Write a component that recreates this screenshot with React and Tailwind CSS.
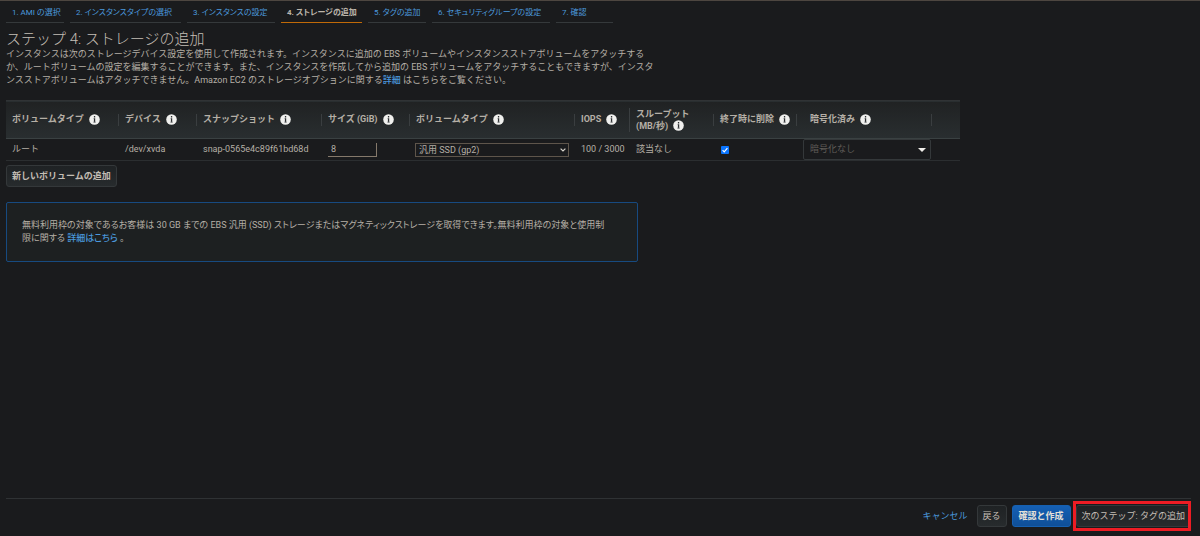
const steps = [
  { label: "1. AMI の選択", width: "w-[58px]" },
  { label: "2. インスタンスタイプの選択", width: "w-[111px]" },
  { label: "3. インスタンスの設定", width: "w-[88px]" },
  { label: "4. ストレージの追加", width: "w-[81px]", active: true },
  { label: "5. タグの追加", width: "w-[58px]" },
  { label: "6. セキュリティグループの設定", width: "w-[118px]" },
  { label: "7. 確認", width: "w-[57px]" },
];

const columns = [
  { label: "ボリュームタイプ", width: "w-[112px]" },
  { label: "デバイス", width: "w-[78px]" },
  { label: "スナップショット", width: "w-[125px]" },
  { label: "サイズ (GiB)", width: "w-[88px]" },
  { label: "ボリュームタイプ", width: "w-[165px]" },
  { label: "IOPS", width: "w-[55px]" },
  { label: "スループット", second: "(MB/秒)", width: "w-[84px]" },
  { label: "終了時に削除", width: "w-[83px]" },
  { label: "暗号化済み", width: "w-[135px]", wide: true },
];

function Info() {
  return (
    <svg viewBox="0 0 22 22" className="h-[11px] w-[11px] shrink-0" aria-hidden="true">
      <circle cx="11" cy="11" r="10.6" fill="#f0f0ee" />
      <path d="M9.8 4.2h2.6v2.6H9.8zM9.8 8.4h2.6v8.4H9.8z" fill="#2b2e30" />
      <path d="M8.2 8.4h1.6v1.2H8.2zM8.2 15.6h5.8v1.2H8.2z" fill="#85878a" />
    </svg>
  );
}

function HeaderCell({ col, first }) {
  return (
    <th scope="col" className="p-0 text-left align-middle font-bold">
      <div
        className={
          "flex items-center gap-[5px] border-l whitespace-nowrap " +
          (first ? "border-transparent pl-[5px] " : "border-[#3a3e40] ") +
          (first ? "" : col.wide ? "pl-[13px] " : "pl-[6px] ") +
          (col.second ? "h-6" : "h-3")
        }
      >
        {col.second ? (
          <span className="leading-3">
            {col.label}
            <span className="flex items-center gap-[5px]">
              {col.second}
              <Info />
            </span>
          </span>
        ) : (
          <>
            {col.label}
            <Info />
          </>
        )}
      </div>
    </th>
  );
}

const button =
  "h-[22px] rounded-[3px] border border-[#34383a] bg-linear-to-b from-[#1f2224] to-[#272b2d] px-[5px] whitespace-nowrap";

export default function App() {
  return (
    <div className="flex min-h-screen flex-col border-t border-[#4d4640] bg-[#1a1b1d] px-[6px] font-[Roboto,'Noto_Sans_CJK_JP',sans-serif] text-[9px] leading-[13px] text-[#b5afa6]">
      <nav aria-label="ステップ" className="flex gap-[6px] [font-feature-settings:'palt']">
        {steps.map((s) => (
          <a
            key={s.label}
            href="#step"
            aria-current={s.active ? "step" : undefined}
            className={
              "h-[22px] shrink-0 border-b pt-[6px] pl-[6px] text-[8px] leading-3 whitespace-nowrap " +
              s.width +
              (s.active ? " border-[#c06a08] font-bold text-[#bcb5ab]" : " border-[#35393b] text-[#4a98dc]")
            }
          >
            {s.label}
          </a>
        ))}
      </nav>

      <main>
        <h1 className="mt-[6px] text-[15px] leading-5 font-light text-[#c4beb5]">ステップ 4: ストレージの追加</h1>
        <p className="-mt-px whitespace-nowrap">
          インスタンスは次のストレージデバイス設定を使用して作成されます。インスタンスに追加の EBS ボリュームやインスタンスストアボリュームをアタッチする
          <br />
          か、ルートボリュームの設定を編集することができます。また、インスタンスを作成してから追加の EBS ボリュームをアタッチすることもできますが、インスタ
          <br />
          ンスストアボリュームはアタッチできません。Amazon EC2 のストレージオプションに関する
          <a href="#details" className="font-medium text-[#4a98dc]">詳細</a> はこちらをご覧ください。
        </p>

        <table className="mt-[13px] w-full max-w-[954px] table-fixed border-collapse">
          <colgroup>
            {columns.map((c, i) => (
              <col key={i} className={c.width} />
            ))}
            <col />
          </colgroup>
          <thead>
            <tr className="h-[38px] border-t border-b border-t-[#303335] border-b-[#3a4142] bg-linear-to-b from-[#202223] to-[#292e30]">
              {columns.map((c, i) => (
                <HeaderCell key={i} col={c} first={i === 0} />
              ))}
              <td className="p-0">
                <div className="h-3 border-l border-[#3a3e40]" />
              </td>
            </tr>
          </thead>
          <tbody>
            <tr className="h-[22px] border-b border-[#2b2e30] whitespace-nowrap">
              <td className="p-0 pl-[6px]">ルート</td>
              <td className="p-0 pl-[7px]">/dev/xvda</td>
              <td className="p-0 pl-[7px]">snap-0565e4c89f61bd68d</td>
              <td className="p-0 pl-[7px]">
                <input
                  aria-label="サイズ (GiB)"
                  defaultValue="8"
                  className="block h-[14px] w-[49px] border-r border-b border-[#85796b] bg-transparent pl-[3px] outline-none"
                />
              </td>
              <td className="p-0 pl-[6px]">
                <div className="grid w-[154px] items-center">
                  <select
                    aria-label="ボリュームタイプ"
                    className="col-start-1 row-start-1 h-[14px] appearance-none border border-[#5e554b] bg-transparent pl-[3px] leading-3"
                  >
                    <option>汎用 SSD (gp2)</option>
                  </select>
                  <svg viewBox="0 0 6 4" className="pointer-events-none col-start-1 row-start-1 mr-[3px] h-1 w-[6px] justify-self-end">
                    <path d="M.6.6 3 3 5.4.6" fill="none" stroke="#d8d4cc" strokeWidth="1.2" />
                  </svg>
                </div>
              </td>
              <td className="p-0 pl-[7px]">100 / 3000</td>
              <td className="p-0 pl-[7px]">該当なし</td>
              <td className="p-0 pl-2">
                <label className="grid h-2 w-2 items-center">
                  <input
                    type="checkbox"
                    defaultChecked
                    aria-label="終了時に削除"
                    className="peer col-start-1 row-start-1 h-2 w-2 appearance-none rounded-[1px] bg-[#0a75ff]"
                  />
                  <svg viewBox="0 0 8 8" className="pointer-events-none col-start-1 row-start-1 hidden h-2 w-2 peer-checked:block">
                    <path d="M1.6 4.2 3.2 5.8 6.4 2.2" fill="none" stroke="#fff" strokeWidth="1.2" />
                  </svg>
                </label>
              </td>
              <td className="p-0 pl-[7px]">
                <div className="grid items-center">
                  <select
                    aria-label="暗号化済み"
                    className="col-start-1 row-start-1 h-[21px] appearance-none rounded-[2px] border border-[#34383a] bg-transparent pl-[6px] text-[#605d59]"
                  >
                    <option>暗号化なし</option>
                  </select>
                  <svg viewBox="0 0 8 4" className="pointer-events-none col-start-1 row-start-1 mr-[5px] h-1 w-2 justify-self-end">
                    <path d="M0 0h8L4 4z" fill="#f0eeea" />
                  </svg>
                </div>
              </td>
              <td className="p-0" />
            </tr>
          </tbody>
        </table>

        <button type="button" className={button + " mt-1 block font-bold text-[#c4beb5]"}>
          新しいボリュームの追加
        </button>

        <div className="mt-[15px] w-full max-w-[632px] rounded-[2px] border border-[#174a80] bg-[#1d2021] px-[15px] py-4 whitespace-nowrap [font-feature-settings:'palt']">
          無料利用枠の対象であるお客様は 30 GB までの EBS 汎用 (SSD) ストレージまたはマグネティックストレージを取得できます。無料利用枠の対象と使用制
          <br />
          限に関する{" "}
          <a href="#free" className="font-medium text-[#4a98dc]">詳細はこちら</a> 。
        </div>
      </main>

      <footer className="mt-auto mr-[3px] flex h-[38px] items-start justify-end gap-[5px] border-t border-[#2f3234] pt-[6px] text-[#c4beb5]">
        <a href="#cancel" className="mr-1 leading-[22px] text-[#4a98dc]">キャンセル</a>
        <button type="button" className={button}>戻る</button>
        <button
          type="button"
          className="h-[22px] rounded-[3px] border border-[#1660b0] bg-linear-to-b from-[#1560b4] to-[#0f4f98] px-[6px] font-bold whitespace-nowrap text-[#e4e0d8]"
        >
          確認と作成
        </button>
        <div className="relative">
          <button type="button" className={button}>次のステップ: タグの追加</button>
          <span className="pointer-events-none absolute -inset-y-1 right-0 -left-[3px] border-3 border-[#ed1c24]" />
        </div>
      </footer>
    </div>
  );
}
